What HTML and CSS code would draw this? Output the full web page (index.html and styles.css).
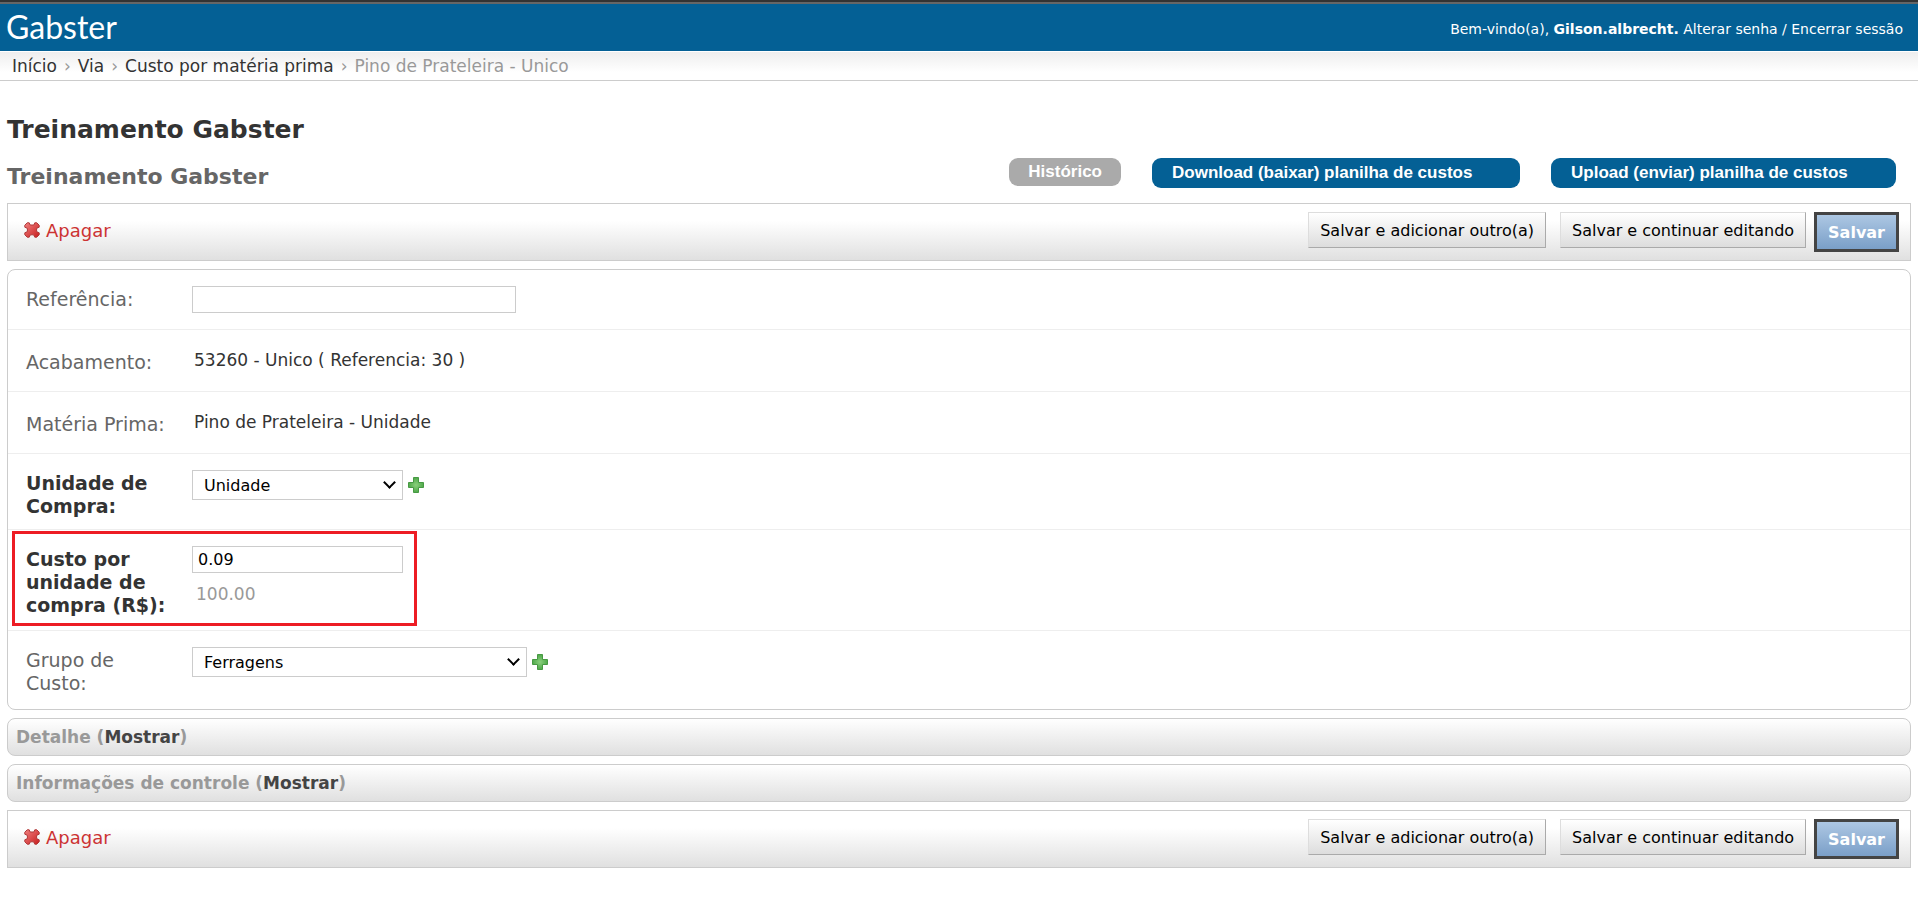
FILE: index.html
```
<!DOCTYPE html>
<html lang="pt-br">
<head>
    <meta charset="UTF-8">
    <title>Custo por matéria prima | Gabster</title>
    <link rel="stylesheet" href="styles.css">
</head>
<body>
    <svg width="0" height="0" class="sprite">
        <defs>
            <linearGradient id="red" x1="0" y1="0" x2="1" y2="1">
                <stop offset="0" stop-color="#f08080"/>
                <stop offset="1" stop-color="#c81e1e"/>
            </linearGradient>
            <radialGradient id="green">
                <stop offset="0" stop-color="#8ad07c"/>
                <stop offset="1" stop-color="#4fa84a"/>
            </radialGradient>
            <symbol id="icon-delete" viewBox="0 0 16 16">
                <path d="M3.2 .8 H5.2 L6.2 3 H9.8 L10.8 .8 H12.8 L15.2 3.2 V5.2 L12.6 6.4 V9.6 L15.2 10.8 V12.8 L12.8 15.2 H10.8 L9.6 12.8 H6.4 L5.2 15.2 H3.2 L.8 12.8 V10.8 L3.4 9.6 V6.4 L.8 5.2 V3.2 Z" fill="url(#red)" stroke="#b03a3a" stroke-linejoin="round"/>
            </symbol>
            <symbol id="icon-add" viewBox="0 0 16 16">
                <path d="M5.5 .5 H10.5 V5.5 H15.5 V10.5 H10.5 V15.5 H5.5 V10.5 H.5 V5.5 H5.5 Z" fill="url(#green)" stroke="#479a43"/>
            </symbol>
        </defs>
    </svg>

    <header id="header">
        <a href="#" class="logo">Gabster</a>
        <div class="user-tools">Bem-vindo(a), <strong>Gilson.albrecht.</strong> <a href="#">Alterar senha</a> / <a href="#">Encerrar sessão</a></div>
    </header>
    <nav class="breadcrumbs">
        <a href="#">Início</a><span>›</span><a href="#">Via</a><span>›</span><a href="#">Custo por matéria prima</a><span>›</span>Pino de Prateleira - Unico
    </nav>

    <main id="content">
        <h1>Treinamento Gabster</h1>
        <div class="title-row">
            <h2>Treinamento Gabster</h2>
            <div class="object-tools">
                <a href="#" class="history">Histórico</a>
                <a href="#" class="tool download">Download (baixar) planilha de custos</a>
                <a href="#" class="tool upload">Upload (enviar) planilha de custos</a>
            </div>
        </div>

        <form onsubmit="return false">
            <div class="submit-row">
                <a href="#" class="delete"><svg width="16" height="16"><use href="#icon-delete"/></svg>Apagar</a>
                <button type="submit">Salvar e adicionar outro(a)</button>
                <button type="submit">Salvar e continuar editando</button>
                <button type="submit" class="default">Salvar</button>
            </div>

            <div class="module">
                <div class="form-row first">
                    <label for="referencia">Referência:</label>
                    <input type="text" id="referencia" class="long">
                </div>
                <div class="form-row">
                    <span class="label">Acabamento:</span>
                    <p>53260 - Unico ( Referencia: 30 )</p>
                </div>
                <div class="form-row">
                    <span class="label">Matéria Prima:</span>
                    <p>Pino de Prateleira - Unidade</p>
                </div>
                <div class="form-row two-lines">
                    <label for="unidade" class="required">Unidade de Compra:</label>
                    <div class="select">
                        <select id="unidade"><option>Unidade</option></select>
                    </div>
                    <a href="#" class="add" aria-label="Adicionar unidade"><svg width="16" height="16"><use href="#icon-add"/></svg></a>
                </div>
                <div class="form-row cost">
                    <label for="custo" class="required">Custo por unidade de compra (R$):</label>
                    <div>
                        <input type="text" id="custo" value="0.09">
                        <p class="help">100.00</p>
                    </div>
                </div>
                <div class="form-row two-lines">
                    <label for="grupo">Grupo de Custo:</label>
                    <div class="select">
                        <select id="grupo" class="long"><option>Ferragens</option></select>
                    </div>
                    <a href="#" class="add" aria-label="Adicionar grupo"><svg width="16" height="16"><use href="#icon-add"/></svg></a>
                </div>
            </div>

            <h3 class="collapsed">Detalhe (<a href="#">Mostrar</a>)</h3>
            <h3 class="collapsed">Informações de controle (<a href="#">Mostrar</a>)</h3>

            <div class="submit-row">
                <a href="#" class="delete"><svg width="16" height="16"><use href="#icon-delete"/></svg>Apagar</a>
                <button type="submit">Salvar e adicionar outro(a)</button>
                <button type="submit">Salvar e continuar editando</button>
                <button type="submit" class="default">Salvar</button>
            </div>
        </form>
    </main>
</body>
</html>
```
FILE: styles.css
```
*, *::before, *::after {
    box-sizing: border-box;
}
body {
    margin: 0;
    font-family: Verdana, "DejaVu Sans", sans-serif;
    font-size: 17px;
    color: #333;
    background: #fff;
}
a {
    color: inherit;
    text-decoration: none;
}
h1, h2, h3, p {
    margin: 0;
}
.sprite {
    position: absolute;
}

/* header */
#header {
    display: flex;
    justify-content: space-between;
    align-items: center;
    height: 51px;
    padding: 0 15px 0 6px;
    border-top: 2px solid #333;
    box-shadow: inset 0 2px #666;
    background: #046095;
    color: #fff;
}
.logo {
    font-family: Lato, sans-serif;
    font-size: 32px;
    line-height: 40px;
}
.user-tools {
    font-size: 14px;
    padding-top: 4px;
}
.breadcrumbs {
    height: 30px;
    padding: 0 12px;
    border-top: 1px solid #fff;
    border-bottom: 1px solid #ccc;
    background: linear-gradient(#eee, #fff 20px);
    line-height: 28px;
    color: #999;
}
.breadcrumbs a {
    color: #333;
}
.breadcrumbs span {
    margin: 0 7px;
}

/* titles */
#content {
    padding: 33px 7px 0;
}
h1 {
    font-size: 25px;
    line-height: 32px;
}
.title-row {
    display: flex;
    justify-content: space-between;
    align-items: flex-start;
    height: 57px;
    padding-top: 12px;
}
h2 {
    font-size: 22px;
    line-height: 38px;
    color: #666;
}
.object-tools {
    display: flex;
    align-items: flex-start;
    gap: 31px;
    padding-right: 15px;
    font: bold 17px/28px Arial, "Liberation Sans", sans-serif;
    color: #fff;
}
.history {
    padding: 0 19px;
    border-radius: 9px;
    background: #aaa;
}
.tool {
    padding: 1px 0 1px 20px;
    border-radius: 9px;
    background: #046095;
}
.download {
    width: 368px;
}
.upload {
    width: 345px;
}

/* save buttons */
.submit-row {
    display: flex;
    align-items: flex-start;
    gap: 14px;
    height: 58px;
    margin-bottom: 8px;
    padding: 8px 11px 0 16px;
    border: 1px solid #ccc;
    background: linear-gradient(#fff 30%, #e0e0e0);
}
.delete {
    display: flex;
    align-items: center;
    gap: 6px;
    height: 36px;
    margin-right: auto;
    font-size: 18px;
    color: #c33;
}
button {
    height: 36px;
    padding: 0 11px;
    border: 1px solid;
    border-color: #ddd #aaa #aaa #ddd;
    background: linear-gradient(#fff, #ddd);
    font: 16px "DejaVu Sans", sans-serif;
    color: #000;
}
button.default {
    height: 40px;
    margin-left: -6px;
    border: 3px solid #444;
    background: linear-gradient(#adc7e3, #7a9fc8);
    font-weight: bold;
    color: #fff;
}

/* form */
.module {
    margin-bottom: 8px;
    border: 1px solid #ccc;
    border-radius: 8px;
}
.form-row {
    display: flex;
    align-items: flex-start;
    min-height: 62px;
    padding: 16px 18px 0;
    border-bottom: 1px solid #eee;
}
.form-row.first {
    min-height: 60px;
}
.form-row:last-child {
    min-height: 78px;
    border-bottom: none;
}
label, .label {
    width: 146px;
    margin-right: 20px;
    padding-top: 2px;
    font-size: 19px;
    line-height: 23px;
    color: #666;
}
.label {
    padding-top: 5px;
}
.required {
    font-weight: bold;
    color: #333;
}
.form-row p {
    padding: 3px 2px;
    line-height: 23px;
}
input, select {
    width: 211px;
    height: 27px;
    padding: 0 5px;
    border: 1px solid #ccc;
    background: #fff;
    font: 16px "DejaVu Sans", sans-serif;
    color: #000;
}
select {
    display: block;
    height: 30px;
    padding: 0 11px;
    appearance: none;
}
input.long {
    width: 324px;
}
select.long {
    width: 335px;
}
.select {
    position: relative;
}
.select::after {
    content: "";
    position: absolute;
    top: 8px;
    right: 9px;
    width: 9px;
    height: 9px;
    border: solid #000;
    border-width: 0 2px 2px 0;
    transform: rotate(45deg);
    pointer-events: none;
}
.two-lines {
    min-height: 76px;
}
.add {
    display: flex;
    margin: 7px 5px;
}
.cost {
    position: relative;
    min-height: 101px;
}
/* red frame round the cost field */
.cost::before {
    content: "";
    position: absolute;
    top: 1px;
    left: 4px;
    width: 405px;
    height: 95px;
    border: 3px solid #ed1c24;
    pointer-events: none;
}
.form-row .help {
    padding: 10px 4px;
    color: #999;
}

/* collapsed fieldsets */
.collapsed {
    height: 38px;
    margin-bottom: 8px;
    padding-left: 8px;
    border: 1px solid #ccc;
    border-radius: 8px;
    background: linear-gradient(#fff, #e0e0e0);
    font-size: 17px;
    line-height: 36px;
    color: #999;
}
.collapsed a {
    color: #444;
}
```
